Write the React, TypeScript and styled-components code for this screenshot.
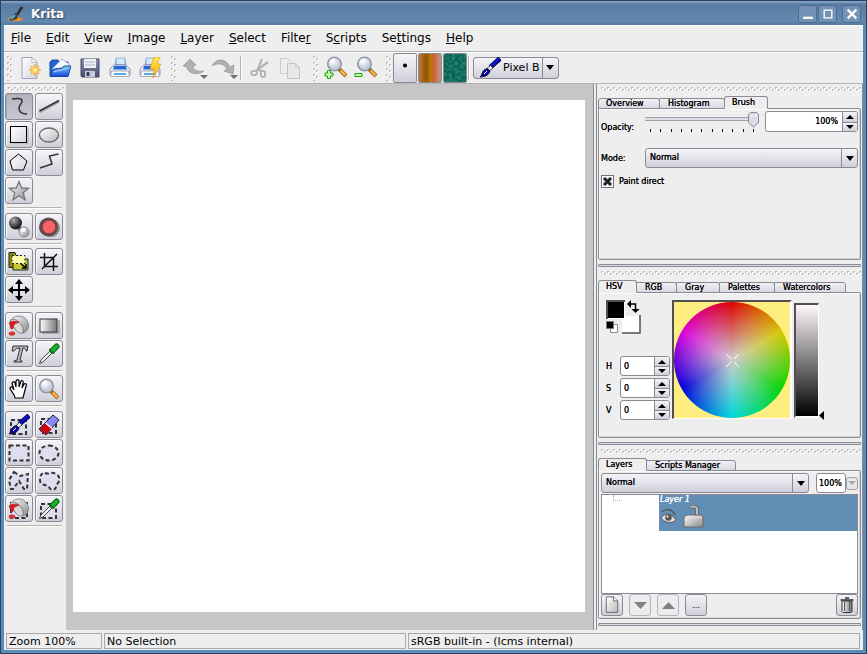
import React from "react";
import styled, { createGlobalStyle, css } from "styled-components";

const svgUrl = (body: string, w: number, h: number) =>
  `url("data:image/svg+xml,${encodeURIComponent(
    `<svg xmlns='http://www.w3.org/2000/svg' width='${w}' height='${h}' viewBox='0 0 ${w} ${h}'>${body}</svg>`
  )}")`;

const arrowDown = svgUrl("<path d='M0 0h8L4 5z' fill='#000'/>", 8, 5);
const thumb = svgUrl(
  "<path d='M2.500 .5h6l2 2v8l-5 4.500-5-4.500v-8z' fill='#dcdce6' stroke='#868694'/><path d='M3 3.500h2M7 3.500h2' stroke='#fff'/>",
  11,
  16
);
const gripH = svgUrl(
  "<path d='M0 1h2v1h-1v1h-1zM3 3h2v1h-1v1h-1z' fill='#bdbdbd'/><path d='M2 2h1v1h-1v1h-1v-1h1zM5 4h1v1h-1v1h-1v-1h1z' fill='#fff'/>",
  6,
  6
);
const cross = svgUrl("<path d='M2 2l7 7M9 2l-7 7' stroke='#222' stroke-width='3'/>", 11, 11);

const LINE = "#8a8a94";
const FACE = "#eeeeee";
const BUTTON = "linear-gradient(#f4f4f8, #e4e4ec 45%, #cfcfda)";

const Global = createGlobalStyle`
  html, body { margin: 0; height: 100%; }
  *, *::before, *::after { box-sizing: border-box; }
  body, button, input, select {
    font-family: "DejaVu Sans", Verdana, sans-serif;
    font-size: 8px;
    color: #000;
  }
  button, input, select { margin: 0; padding: 0; outline: none; }
  svg { display: block; flex: none; }
`;

/* ---------- window ---------- */
const Window = styled.div`
  min-height: 100vh;
  display: flex;
  flex-direction: column;
  background: ${FACE};
  border: 1px solid #29425e;
  border-width: 0 1px 1px;
  box-shadow: inset 3px 0 #5b8bb8, inset -3px 0 #5b8bb8, inset 0 -3px #5b8bb8;
  padding: 0 3px 3px;
`;
const TitleBar = styled.header`
  height: 25px;
  margin: 0 -3px;
  padding: 3px 5px 0 5px;
  display: flex;
  align-items: center;
  gap: 7px;
  background: linear-gradient(#2e3f58 0 1px, #7fa3c6 1px 2px, #587ba0 4px, #6389b0 22px, #587ea4 23px);
`;
const Title = styled.h1`
  flex: 1;
  margin: 0;
  font-size: 12px;
  line-height: 16px;
  color: #fff;
  text-shadow: 1px 1px 1px #2c4464;
`;
const WindowButton = styled.button<{ $apart?: boolean }>`
  width: 19px;
  height: 18px;
  display: grid;
  place-items: center;
  border: 1px solid #4d6d90;
  border-radius: 3px;
  background: #7393b6;
  margin-left: ${(p) => (p.$apart ? "-2px" : "-6px")};
`;
const MenuBar = styled.nav`
  height: 27px;
  padding: 0 7px 2px;
  display: flex;
  align-items: center;
  gap: 15px;
  border-top: 1px solid #fff;
  border-bottom: 1px solid #b4b4b4;
`;
const MenuItem = styled.button`
  border: 0;
  background: none;
  font-size: 12px;
  line-height: 18px;
  u { text-underline-offset: 1px; }
`;

/* ---------- toolbar ---------- */
const Toolbar = styled.div`
  height: 32px;
  padding-bottom: 1px;
  display: flex;
  align-items: center;
  border-top: 1px solid #fff;
  border-bottom: 1px solid #b4b4b4;
`;
const ToolbarGroup = styled.div<{ $start?: number; $end: number }>`
  display: flex;
  align-items: center;
  gap: 6px;
  padding: 0 ${(p) => p.$end}px 0 ${(p) => p.$start ?? 0}px;
`;
const ChooserGroup = styled(ToolbarGroup)`
  gap: 1px;
`;
const GripV = styled.div<{ $end?: number }>`
  width: 6px;
  height: 26px;
  margin: 0 ${(p) => p.$end ?? 5}px 0 3px;
  background: ${gripH};
`;
const GripRow = styled.div`
  height: 6px;
  margin: 2px 0 0 3px;
  background: ${gripH};
`;
const IconButton = styled.button`
  width: 24px;
  height: 26px;
  display: grid;
  place-items: center;
  border: 0;
  background: none;
`;
const Divider = styled.div`
  width: 2px;
  height: 24px;
  border-left: 1px solid #b0b0b0;
  border-right: 1px solid #fff;
`;
const Chooser = styled.button`
  width: 24px;
  height: 30px;
  display: grid;
  place-items: center;
  border: 1px solid ${LINE};
  border-radius: 2px;
  background: ${BUTTON};
  overflow: hidden;
`;
const PaintopBox = styled.label`
  display: flex;
  align-items: center;
  width: 86px;
  height: 22px;
  margin-left: 3px;
  padding-left: 5px;
  border: 1px solid ${LINE};
  border-radius: 3px;
  background: ${BUTTON};
`;
const PaintopSelect = styled.select`
  appearance: none;
  flex: 1;
  min-width: 0;
  height: 20px;
  padding: 0 17px 0 2px;
  border: 0;
  font-size: 11px;
  text-overflow: clip;
  background: ${arrowDown} right 4px center no-repeat,
    linear-gradient(${LINE}, ${LINE}) right 15px center / 1px 100% no-repeat;
`;

/* ---------- main area ---------- */
const Main = styled.main`
  flex: 1;
  display: flex;
`;
const Toolbox = styled.aside`
  flex: 0 0 62px;
  padding: 0 1px;
`;
const ToolGroup = styled.div<{ $tight?: boolean }>`
  display: grid;
  grid-template-columns: 28px 28px;
  gap: 1px 2px;
  margin-top: 1px;
  &::after {
    content: "";
    grid-column: 1 / -1;
    height: 2px;
    margin: 2px 1px ${(p) => (p.$tight ? 2 : 3)}px 2px;
    border-top: 1px solid #b4b4b4;
    border-bottom: 1px solid #fff;
  }
`;
const Tool = styled.button<{ $on?: boolean }>`
  height: 27px;
  display: grid;
  place-items: center;
  border: 1px solid ${LINE};
  border-radius: 3px;
  background: ${(p) => (p.$on ? "linear-gradient(#b4b4be, #c6c6d0)" : BUTTON)};
  box-shadow: inset 1px 1px ${(p) => (p.$on ? "#a8a8b2" : "#fafafc")};
`;
const Workspace = styled.section`
  flex: 1;
  display: flex;
  padding: 16px 8px 18px 7px;
  background: #c6c6c6;
`;
const Paper = styled.div`
  flex: 1;
  background: #fff;
`;

/* ---------- docks ---------- */
const Docks = styled.aside`
  flex: 0 0 270px;
  display: grid;
  grid-template-rows: 184fr 178fr 184fr;
  padding-left: 2px;
  border-left: 1px solid ${LINE};
`;
const Dock = styled.section`
  display: flex;
  flex-direction: column;
  min-height: 0;
  padding: 0 1px 1px 1px;
  border-left: 1px solid ${LINE};
  border-right: 1px solid ${LINE};
  &::after {
    content: "";
    height: 3px;
    margin-top: 4px;
    border: 1px solid ${LINE};
    background: #dcdce6;
    border-radius: 1px;
  }
  &:last-child { padding-bottom: 4px; }
`;
const Tabs = styled.div`
  display: flex;
  align-items: flex-end;
  height: 17px;
  margin-bottom: -1px;
`;
const Tab = styled.button<{ $on?: boolean; $w: number }>`
  width: ${(p) => p.$w}px;
  height: 11px;
  padding-left: 8px;
  text-align: left;
  line-height: 9px;
  border: 1px solid ${LINE};
  border-radius: 0 3px 0 0;
  margin-left: -1px;
  background: linear-gradient(#f0f0f4, #d8d8e2);
  text-shadow: 0 0 0 #000;
  &:first-child { margin-left: 0; padding-left: 7px; border-radius: 3px 3px 0 0; }
  ${(p) =>
    p.$on &&
    css`
      height: 13px;
      padding-left: 7px;
      background: ${FACE};
      border-bottom-color: ${FACE};
      border-radius: 3px 3px 0 0;
      z-index: 1;
    `}
`;
const Panel = styled.div`
  flex: 1;
  min-height: 0;
  display: flex;
  flex-direction: column;
  border: 1px solid ${LINE};
  border-radius: 0 2px 2px 2px;
  box-shadow: inset 1px 1px #fafafa, inset -1px -1px #d4d4d4;
  text-shadow: 0 0 0 #000;
`;
const BrushForm = styled.div`
  display: grid;
  grid-template-columns: 44px 1fr;
  align-items: center;
  row-gap: 16px;
  padding: 2px;
`;
const OpacityLabel = styled.label`
  align-self: end;
`;
const OpacityRow = styled.div`
  display: grid;
  grid-template-columns: 1fr 93px;
  column-gap: 6px;
`;
const Slider = styled.input`
  appearance: none;
  display: block;
  width: 100%;
  height: 18px;
  background: linear-gradient(#a0a0aa 0 1px, #dedee6 1px 3px, #a0a0aa 3px 4px) 0 6px / 100% 4px no-repeat;
  &::-webkit-slider-thumb {
    appearance: none;
    width: 11px;
    height: 16px;
    background: ${thumb};
  }
`;
const Ticks = styled.div`
  display: flex;
  justify-content: space-between;
  padding: 0 5px;
  i { width: 1px; height: 3px; background: #000; }
`;
const SpinBox = styled.div<{ $w?: number }>`
  display: flex;
  width: ${(p) => (p.$w ? `${p.$w}px` : "auto")};
  height: ${(p) => (p.$w ? 20 : 21)}px;
  border: 1px solid ${LINE};
  border-radius: 3px;
  background: #fff;
  overflow: hidden;
`;
const SpinInput = styled.input<{ $right?: boolean }>`
  flex: 1;
  min-width: 0;
  padding: 0 4px 0 3px;
  border: 0;
  background: none;
  text-align: ${(p) => (p.$right ? "right" : "left")};
  text-shadow: 0 0 0 #000;
`;
const SpinButtons = styled.div`
  width: 15px;
  display: grid;
  grid-template-rows: 1fr 1fr;
  border-left: 1px solid ${LINE};
  button {
    display: grid;
    place-items: center;
    border: 0;
    background: ${BUTTON};
  }
  button + button { border-top: 1px solid ${LINE}; }
`;
const Combo = styled.select`
  appearance: none;
  flex: 1;
  width: 100%;
  height: 20px;
  padding: 0 18px 2px 4px;
  border: 1px solid ${LINE};
  border-radius: 3px;
  text-shadow: 0 0 0 #000;
  background: ${arrowDown} right 3px center no-repeat,
    linear-gradient(${LINE}, ${LINE}) right 15px center / 1px 100% no-repeat, ${BUTTON};
`;
const Check = styled.label`
  display: flex;
  align-items: center;
  gap: 5px;
  padding: 5px 2px;
  input {
    appearance: none;
    width: 13px;
    height: 13px;
    border: 1px solid #70707a;
    background: #e8e8ee;
    box-shadow: inset 0 0 0 1px #fff;
  }
  input:checked { background: ${cross} center no-repeat #e8e8ee; }
`;

const ColorForm = styled.div`
  display: flex;
  padding: 7px;
`;
const ColorLeft = styled.div`
  width: 66px;
  display: flex;
  flex-direction: column;
  justify-content: space-between;
`;
const ChannelList = styled.div`
  display: grid;
  gap: 2px;
`;
const Channel = styled.label`
  display: flex;
  align-items: center;
  justify-content: space-between;
  width: 64px;
`;
const WheelBox = styled.div`
  display: grid;
  place-items: center;
  width: 120px;
  height: 119px;
  margin-bottom: 1px;
  border: solid #505050;
  border-width: 2px 0 0 2px;
  border-right: 2px solid #fff;
  border-bottom: 1px solid #fff;
  background: #feee82;
`;
const Wheel = styled.div`
  width: 116px;
  height: 116px;
  display: grid;
  place-items: center;
  border-radius: 50%;
  background: radial-gradient(circle closest-side, #cdcdcd 0, #cdcdcd00 100%),
    conic-gradient(#dc0000, #d8c800 60deg, #00d800 120deg, #00d8dc 180deg, #0000dc 240deg, #dc00dc 300deg, #dc0000);
`;
const ValueBar = styled.div`
  width: 25px;
  height: 115px;
  margin: 3px 0 0 2px;
  border: solid #505050;
  border-width: 2px 0 0 2px;
  border-right: 1px solid #fff;
  border-bottom: 2px solid #fff;
  background: linear-gradient(#fdf8fc, #000);
`;
const ValueMark = styled.div`
  align-self: flex-end;
`;

const LayerForm = styled.div`
  flex: 1;
  display: flex;
  flex-direction: column;
  padding: 2px;
  min-height: 0;
`;
const LayerTop = styled.div`
  display: flex;
  align-items: center;
`;
const PercentInput = styled.input`
  width: 30px;
  height: 20px;
  margin-left: 7px;
  padding-left: 2px;
  border: 1px solid ${LINE};
  border-radius: 3px;
  background: #fff;
  text-shadow: 0 0 0 #000;
`;
const PopButton = styled.button`
  width: 12px;
  height: 13px;
  display: grid;
  place-items: center;
  border: 1px solid #a0a0a6;
  border-radius: 3px;
  background: #e6e6ea;
`;
const LayerList = styled.ul`
  flex: 1;
  margin: 1px 0 0;
  padding: 0;
  list-style: none;
  border: 1px solid ${LINE};
  background: #fff;
`;
const LayerRow = styled.li`
  display: grid;
  grid-template-columns: 57px 1fr;
`;
const Branch = styled.div`
  width: 9px;
  height: 6px;
  margin-left: 11px;
  border: dotted #b0b0b0;
  border-width: 0 0 1px 1px;
`;
const LayerItem = styled.div`
  height: 36px;
  padding-left: 1px;
  background: #628eb5;
  color: #fff;
  font-style: italic;
  line-height: 10px;
  text-shadow: 0 0 0 #fff;
`;
const LayerIcons = styled.div`
  display: flex;
  gap: 5px;
`;
const LayerActions = styled.div`
  display: flex;
  gap: 6px;
`;
const ActionButton = styled.button`
  width: 22px;
  height: 22px;
  display: grid;
  place-items: center;
  border: 1px solid ${LINE};
  border-radius: 3px;
  background: ${BUTTON};
  &:disabled { border-color: #b4b4ba; background: #ececee; }
  &:last-child { margin-left: auto; }
`;

/* ---------- status bar ---------- */
const StatusBar = styled.footer`
  display: grid;
  grid-template-columns: 96fr 302fr 452fr;
  gap: 2px;
  padding: 3px 3px 1px 2px;
`;
const StatusCell = styled.div`
  height: 16px;
  padding: 1px 0 0 2px;
  border: 1px solid #a8a8a8;
  font-size: 11px;
  line-height: 14px;
  white-space: nowrap;
`;

/* ---------- drawings ---------- */
const Art = ({ s = 22, children }: { s?: number; children: React.ReactNode }) => (
  <svg width={s} height={s} viewBox="0 0 22 22" fill="none" aria-hidden="true">
    {children}
  </svg>
);

const Defs = () => (
  <svg width="0" height="0" aria-hidden="true">
    <defs>
      <linearGradient id="paper" x2="1" y2="1"><stop stopColor="#fff" /><stop offset="1" stopColor="#d4d4e0" /></linearGradient>
      <linearGradient id="steel" x2="1" y2="1"><stop stopColor="#fff" /><stop offset="1" stopColor="#888" /></linearGradient>
      <linearGradient id="pale" x2="1" y2="1"><stop stopColor="#fff" /><stop offset="1" stopColor="#b8b8b8" /></linearGradient>
      <linearGradient id="blue" x2="0" y2="1"><stop stopColor="#8cc8ff" /><stop offset="1" stopColor="#0a48d8" /></linearGradient>
      <linearGradient id="bolt" x2="0" y2="1"><stop stopColor="#ffee50" /><stop offset="1" stopColor="#ffa800" /></linearGradient>
      <linearGradient id="fade"><stop stopColor="#fff" /><stop offset="1" stopColor="#777" /></linearGradient>
      <linearGradient id="floppy" x2="0" y2="1"><stop stopColor="#8890b0" /><stop offset="1" stopColor="#464c70" /></linearGradient>
      <linearGradient id="wood">
        <stop stopColor="#b87848" /><stop offset=".22" stopColor="#a06010" /><stop offset=".35" stopColor="#945400" />
        <stop offset=".5" stopColor="#b87410" /><stop offset=".62" stopColor="#cc6a20" /><stop offset=".68" stopColor="#d85838" />
        <stop offset=".78" stopColor="#c47858" /><stop offset="1" stopColor="#c09888" />
      </linearGradient>
      <radialGradient id="lens" cx=".4" cy=".3"><stop stopColor="#fff" /><stop offset="1" stopColor="#c4ccdc" /></radialGradient>
      <radialGradient id="ball" cx=".35" cy=".3" r=".6"><stop stopColor="#aaa" /><stop offset="1" stopColor="#222" /></radialGradient>
      <filter id="cloth" x="0" y="0" width="1" height="1" colorInterpolationFilters="sRGB">
        <feTurbulence type="fractalNoise" baseFrequency=".35" numOctaves="2" seed="4" />
        <feColorMatrix values=".2 0 0 0 -.02  .35 0 0 0 .26  .3 0 0 0 .22  0 0 0 0 1" />
      </filter>
    </defs>
  </svg>
);

const Brush = () => (
  <>
    <path d="M21 1.500L11.500 10" stroke="#000058" strokeWidth="5" />
    <path d="M20.500 1.500L11.500 9.500" stroke="#1010c8" strokeWidth="3" />
    <path d="M11.500 8.500l2.500 2.500-3.500 3-2.500-2.500z" fill="#e8e8e8" stroke="#333" strokeWidth=".8" />
    <path d="M8.500 11.500l2.500 2.500c-1 4-4 5.500-10 6 3-2 1-7 7.500-8.500z" fill="#0808a8" stroke="#000" strokeWidth=".8" />
    <path d="M5 17l3-3" stroke="#fff" />
  </>
);
const Magnifier = () => (
  <>
    <path d="M13 13l7 7" stroke="#9a6210" strokeWidth="4" />
    <path d="M14.500 14.500l5 5" stroke="#f4b040" strokeWidth="2.500" />
    <circle cx="8.500" cy="8" r="6.800" fill="url(#lens)" stroke="#9098a8" strokeWidth="1.500" />
    <path d="M4.500 7a4.500 4.500 0 0 1 4-4" stroke="#fff" strokeWidth="1.500" />
  </>
);
const Printer = () => (
  <>
    <path d="M6 9L7 1h9l1 8z" fill="url(#blue)" stroke="#98a4b8" strokeWidth=".8" />
    <path d="M7.500 1.500h8l.3 6h-8.500z" fill="#d4e8fc" />
    <path d="M1 12l4-4h12l4 4v6H1z" fill="url(#paper)" stroke="#9094a8" />
    <path d="M5 9h12l1 3.500H4z" fill="#2068d8" />
    <path d="M2.500 14h17l1 5.500h-19z" fill="#fff" stroke="#a4a8b8" />
    <path d="M5 16h12l.5 2h-13z" fill="#50a8f0" />
  </>
);
const Dashed = ({ d }: { d: string }) => (
  <path d={d} fill="#dedeee" stroke="#333" strokeWidth="2" strokeDasharray="4 2.500" />
);
const Bucket = () => (
  <>
    <path d="M2 6c2-3 5-5 9-5 5 0 9 4 9.500 9 .3 4-2 7.500-6 8z" fill="url(#steel)" stroke="#777" strokeWidth=".8" />
    <path d="M2 6c1-2 5-3 9 1 4 4 5 8 3.500 11C12 19 9 17 7 14z" fill="#d8d8d8" stroke="#666" strokeWidth=".8" />
    <path d="M1 8c2-2 6-2.500 10-1L6 9.500C5 11 6 14 4 14c-2.500 0-1-3-3-6z" fill="#e01818" stroke="#901010" strokeWidth=".5" />
    <ellipse cx="4" cy="18.500" rx="3" ry="1.800" fill="#f03030" stroke="#a01818" strokeWidth=".5" />
  </>
);
const Dropper = () => (
  <>
    <path d="M13 7L3 17l-1.500 3.500L5 19 15 9z" fill="#e8f4ec" stroke="#444" />
    <path d="M11.500 6l4.500 4.500" stroke="#222" strokeWidth="1.600" />
    <path d="M14.500 7.500l4-4" stroke="#087018" strokeWidth="6" strokeLinecap="round" />
    <path d="M15 7l3.500-3.500" stroke="#20b030" strokeWidth="3.500" strokeLinecap="round" />
  </>
);
const NewDoc = () => (
  <Art>
    <path d="M3 .5h10l5 5v16H3z" fill="url(#paper)" stroke="#a4a4b4" />
    <path d="M13 .5v5h5z" fill="#fff" stroke="#a4a4b4" strokeWidth=".7" />
    <path d="M16 7l1 3 3-1-1 3 3 1-3 1 1 3-3-1-1 3-1-3-3 1 1-3-3-1 3-1-1-3 3 1z" fill="#ffd060" stroke="#e8a030" strokeWidth=".6" />
    <circle cx="16" cy="13" r="1.500" fill="#fff8c8" />
  </Art>
);
const OpenDoc = () => (
  <Art>
    <path d="M1 19V5l2-2h6l1 2h9v14z" fill="#2264d8" stroke="#1848a0" />
    <path d="M3 12L13 2l7 5-2 6z" fill="#f4f8ff" stroke="#98a8c8" strokeWidth=".8" />
    <path d="M1 19.500L5 12l8-1 2-2h7l-3 10.500z" fill="url(#blue)" stroke="#1848a0" />
    <path d="M4 15l9-2 6-2" stroke="#a0d4ff" />
  </Art>
);
const Save = () => (
  <Art>
    <path d="M2 2h18v18H3l-1-1z" fill="url(#floppy)" stroke="#404868" />
    <path d="M5 2h12v9H5z" fill="#eef0f6" />
    <path d="M6 5h10M6 8h10" stroke="#b0b4c4" />
    <path d="M6 14h10v6H6z" fill="#c8ccd8" /><path d="M7.500 15h3v4h-3z" fill="#383e60" />
  </Art>
);
const Undo = ({ flip }: { flip?: boolean }) => (
  <svg width="26" height="24" viewBox="0 0 26 24" aria-hidden="true">
    <g fill="#b0b0b0" stroke="#929292" strokeWidth=".7">
      {flip ? (
        <path d="M0 10c4-8 14-8 18 1l4-2-1 9-9-3 3-2c-3-5-8-7-15-3z" />
      ) : (
        <path d="M1 10l7-7 6 6-3 1c0 4 4 6 11 5-5 4-16 4-17-4z" />
      )}
    </g>
    <path d="M18 19h8l-4 4z" fill="#707070" />
  </svg>
);
const Cut = () => (
  <Art>
    <path d="M13 2l-5 12M19 5L7 14" stroke="#b4b4b4" strokeWidth="2.200" />
    <ellipse cx="5" cy="16" rx="3" ry="2.200" stroke="#b0b0b0" strokeWidth="1.800" />
    <ellipse cx="14" cy="17" rx="2.200" ry="3.200" stroke="#b0b0b0" strokeWidth="1.800" />
    <path d="M9 12l4 3" stroke="#b0b0b0" strokeWidth="2" />
  </Art>
);
const Copy = () => (
  <Art>
    <path d="M1.500 1.500h7l4 4v11h-11z" fill="#eee" stroke="#ccc" />
    <path d="M8.500 6.500h8l4 4v11h-12z" fill="#e8e8e8" stroke="#c4c4c4" /><path d="M16.500 6.500v4h4" stroke="#ccc" />
  </Art>
);
const Zoom = ({ plus }: { plus?: boolean }) => (
  <svg width="24" height="24" viewBox="0 0 24 24" fill="none" aria-hidden="true">
    <g transform="translate(2 0)"><Magnifier /></g>
    <path d={plus ? "M1 17h2.500v-2.500h3V17H9v3H6.500v2.500h-3V20H1z" : "M1 17.500h7v3H1z"} fill="#c8ffb0" stroke="#18a010" />
  </svg>
);

const tools: Record<string, React.ReactNode> = {
  Freehand: <path d="M4 3c5-1 10-1 10 2 0 3-3 4-3 7s1 6 8 6" stroke="#333" strokeWidth="1.500" />,
  Line: <><path d="M1.500 16L21 5.500" stroke="#aaa" strokeWidth="3" /><path d="M1.500 15L21 4.500" stroke="#333" strokeWidth="1.500" /></>,
  Rectangle: <><path d="M4 19h16V3" stroke="#aaa" strokeWidth="1" /><rect x="2.500" y="2.500" width="16" height="16" fill="url(#paper)" stroke="#000" /></>,
  Ellipse: <ellipse cx="11" cy="11" rx="9.500" ry="7" fill="url(#pale)" stroke="#666" strokeWidth="1.300" />,
  Polygon: <path d="M10.500 2L19 9l-3.500 9h-11L2 9z" fill="url(#paper)" stroke="#000" />,
  Polyline: <path d="M2 16l12-4-2.500-8 9-2" stroke="#333" strokeWidth="1.500" />,
  Star: <path d="M11 1.500l2.600 6.500 7 .4-5.400 4.400 2 7-6.200-4-6 4 1.800-7L1.400 8.400l7-.4z" fill="url(#steel)" stroke="#777" strokeWidth="1.300" />,
  Duplicate: <><path d="M9 10l5 5" stroke="#777" strokeWidth="4" /><circle cx="16" cy="16" r="5" fill="url(#steel)" stroke="#888" /><circle cx="15.500" cy="14" r="2.200" fill="#fff" /><circle cx="7.500" cy="7" r="6.500" fill="url(#ball)" /></>,
  Filter: <><circle cx="13" cy="12" r="9" fill="#8a8a8a" /><circle cx="10.500" cy="11" r="9.500" fill="#585050" /><circle cx="11" cy="11" r="6.800" fill="#f46468" stroke="#a03038" /></>,
  Transform: <><path d="M1 1.500h6l1 3h3v12H1z" fill="#8c8c10" stroke="#222" /><path d="M5 8h15v11H5z" fill="#c8c830" stroke="#222" /><path d="M4 4.500h13v8H4z" fill="#ffffb0" stroke="#222" strokeDasharray="2 2" /><path d="M13 13l5 4M18 13v4h-4" stroke="#000" strokeWidth="1.500" /></>,
  Crop: <path d="M6.500 2v13.500H20M2 6.500h13.500V20M4 18L19 3" stroke="#111" strokeWidth="1.500" />,
  Move: <><path d="M11 2v18M2 11h18" stroke="#000" strokeWidth="2" /><path d="M11 0l4 5H7zM11 22l4-5H7zM0 11l5-4v8zM22 11l-5-4v8z" fill="#000" /></>,
  Fill: <Bucket />,
  Gradient: <><path d="M4 18h17V5" stroke="#aaa" strokeWidth="2" /><rect x="2" y="4" width="17" height="13" fill="url(#fade)" stroke="#333" /></>,
  Text: <path d="M5 3h15l-1 5h-1c0-2-1-3-3-3l-3 12 2 1v1H6v-1l3-1 3-12C9 5 7 6 6 8H4z" fill="#bbb" stroke="#333" />,
  Picker: <Dropper />,
  Pan: <path d="M7 20c0-4-4-6-5-10 1-2 3-1 4 2L4 5c1-2 3-1 3 0l1 4V3c1-2 3-1 3 0v6l2-6c1-1 3 0 2 2l-1 5 2-4c2-1 3 0 2 2-1 4-2 8-3 12z" fill="#fff" stroke="#000" strokeWidth="1.200" />,
  Magnify: <Magnifier />,
  "Paint selection": <><Dashed d="M3 6h15v14H3z" /><Brush /></>,
  "Erase selection": <><Dashed d="M3 5h15v14H3z" /><path d="M1 15L15 1l6 5L8 21z" fill="#8888f8" stroke="#222" /><path d="M1.500 15l6-6 6.500 5.500-6 6z" fill="#d00010" /><path d="M7.500 9l6.500 5.500" stroke="#fff" strokeWidth="1.500" /></>,
  "Select rectangle": <Dashed d="M1.500 3.500h19v15h-19z" />,
  "Select ellipse": <Dashed d="M11 3.500a9.500 7.500 0 1 1 0 15a9.500 7.500 0 1 1 0-15" />,
  "Select polygon": <Dashed d="M6 2l6 4 8-2-1 15h-3l-5-8-6 8H3L1 10z" />,
  "Select outline": <Dashed d="M7 3c4 2 6-2 11 1s4 8 0 11c1 6-6 6-7 2-3-3-9-1-9-7 0-4 1-7 5-7z" />,
  "Select contiguous": <><Dashed d="M3 5h16v15H3z" /><Bucket /></>,
  "Select similar": <><Dashed d="M3 6h15v14H3z" /><Dropper /></>,
};

const groups: { names: string[]; tight?: boolean }[] = [
  { names: ["Freehand", "Line", "Rectangle", "Ellipse", "Polygon", "Polyline", "Star"] },
  { names: ["Duplicate", "Filter"], tight: true },
  { names: ["Transform", "Crop", "Move"] },
  { names: ["Fill", "Gradient", "Text", "Picker"], tight: true },
  { names: ["Pan", "Magnify"] },
  { names: ["Paint selection", "Erase selection", "Select rectangle", "Select ellipse", "Select polygon", "Select outline", "Select contiguous", "Select similar"] },
];

const menus = ["_File", "_Edit", "_View", "_Image", "_Layer", "_Select", "Filte_r", "S_cripts", "Se_ttings", "_Help"];

const Triangle = ({ up, w = 8, color = "#000" }: { up?: boolean; w?: number; color?: string }) => (
  <svg width={w} height={Math.ceil(w / 2)} viewBox="0 0 8 4" preserveAspectRatio="none" aria-hidden="true">
    <path d={up ? "M0 4h8L4 0z" : "M0 0h8L4 4z"} fill={color} />
  </svg>
);

const Spin = ({ label, value, width, right }: { label: string; value: string; width?: number; right?: boolean }) => (
  <SpinBox $w={width}>
    <SpinInput id={label} aria-label={label} defaultValue={value} $right={right} />
    <SpinButtons>
      <button aria-label={`Increase ${label}`}><Triangle up /></button>
      <button aria-label={`Decrease ${label}`}><Triangle /></button>
    </SpinButtons>
  </SpinBox>
);

const TabStrip = ({ tabs, active }: { tabs: [string, number][]; active: string }) => (
  <Tabs role="tablist">
    {tabs.map(([name, w]) => (
      <Tab key={name} role="tab" aria-selected={name === active} $on={name === active} $w={w}>{name}</Tab>
    ))}
  </Tabs>
);

export default function App() {
  return (
    <>
      <Global />
      <Window>
        <TitleBar>
          <svg width="18" height="18" viewBox="0 0 18 18" fill="none" aria-hidden="true">
            <path d="M1 14c3-3 13-2 16 0-2 3-12 3-16 0z" fill="#f09020" />
            <path d="M16 2l-5 8" stroke="#302820" strokeWidth="2.500" />
            <path d="M12 9l-1 5-6 2-2-2c3-1 4-5 6-6z" fill="#404040" />
            <path d="M5 14l4-4" stroke="#58b8c8" strokeWidth="2" />
          </svg>
          <Title>Krita</Title>
          <WindowButton aria-label="Minimize"><Art s={12}><path d="M2 18h18" stroke="#fff" strokeWidth="4" /></Art></WindowButton>
          <WindowButton aria-label="Maximize"><Art s={12}><path d="M4 4h14v14H4z" stroke="#fff" strokeWidth="2.500" /></Art></WindowButton>
          <WindowButton $apart aria-label="Close"><Art s={12}><path d="M3 3l16 16M19 3L3 19" stroke="#fff" strokeWidth="4" /></Art></WindowButton>
        </TitleBar>
        <MenuBar>
          {menus.map((m) => {
            const [before, after] = m.split("_");
            return <MenuItem key={m}>{before}<u>{after[0]}</u>{after.slice(1)}</MenuItem>;
          })}
        </MenuBar>
        <Toolbar>
          <GripV />
          <ToolbarGroup $end={6}>
            <IconButton aria-label="New"><NewDoc /></IconButton>
            <IconButton aria-label="Open"><OpenDoc /></IconButton>
            <IconButton aria-label="Save"><Save /></IconButton>
            <IconButton aria-label="Print"><Art><Printer /></Art></IconButton>
            <IconButton aria-label="Quick print"><Art><Printer /><path d="M15 0h6l-3 7h4l-8 14 1-9h-4z" fill="url(#bolt)" stroke="#e89000" strokeWidth=".6" /></Art></IconButton>
          </ToolbarGroup>
          <GripV />
          <ToolbarGroup $end={4}>
            <IconButton aria-label="Undo"><Undo /></IconButton>
            <IconButton aria-label="Redo"><Undo flip /></IconButton>
          </ToolbarGroup>
          <Divider />
          <ToolbarGroup $start={6} $end={8}>
            <IconButton aria-label="Cut"><Cut /></IconButton>
            <IconButton aria-label="Copy"><Copy /></IconButton>
          </ToolbarGroup>
          <GripV />
          <ToolbarGroup $end={5}>
            <IconButton aria-label="Zoom in"><Zoom plus /></IconButton>
            <IconButton aria-label="Zoom out"><Zoom /></IconButton>
          </ToolbarGroup>
          <GripV $end={1} />
          <ChooserGroup $end={1}>
            <Chooser aria-label="Brush shape"><svg width="6" height="10" viewBox="0 0 6 10"><circle cx="3" cy="2.500" r="2" /></svg></Chooser>
            <Chooser aria-label="Gradient"><svg width="22" height="28"><rect width="22" height="28" fill="url(#wood)" /></svg></Chooser>
            <Chooser aria-label="Pattern"><svg width="22" height="28"><rect width="22" height="28" fill="#187060" filter="url(#cloth)" /></svg></Chooser>
          </ChooserGroup>
          <Divider />
          <PaintopBox>
            <Art><Brush /></Art>
            <PaintopSelect aria-label="Paint operation"><option>Pixel B</option></PaintopSelect>
          </PaintopBox>
        </Toolbar>
        <Main>
          <Toolbox>
            <GripRow />
            {groups.map((g) => (
              <ToolGroup key={g.names[0]} $tight={g.tight}>
                {g.names.map((n) => (
                  <Tool key={n} aria-label={n} $on={n === "Freehand"}><Art>{tools[n]}</Art></Tool>
                ))}
              </ToolGroup>
            ))}
          </Toolbox>
          <Workspace><Paper /></Workspace>
          <Docks>
            <Dock>
              <GripRow />
              <TabStrip active="Brush" tabs={[["Overview", 62], ["Histogram", 66], ["Brush", 44]]} />
              <Panel>
                <BrushForm>
                  <OpacityLabel htmlFor="opacity">Opacity:</OpacityLabel>
                  <OpacityRow>
                    <div>
                      <Slider id="opacity" type="range" defaultValue={100} />
                      <Ticks>{Array.from({ length: 11 }, (_, i) => <i key={i} />)}</Ticks>
                    </div>
                    <Spin label="Opacity percent" value="100%" right />
                  </OpacityRow>
                  <label htmlFor="mode">Mode:</label>
                  <Combo id="mode"><option>Normal</option></Combo>
                </BrushForm>
                <Check><input type="checkbox" defaultChecked />Paint direct</Check>
              </Panel>
            </Dock>
            <Dock>
              <GripRow />
              <TabStrip active="HSV" tabs={[["HSV", 39], ["RGB", 41], ["Gray", 44], ["Palettes", 56], ["Watercolors", 72]]} />
              <Panel>
                <ColorForm>
                  <ColorLeft>
                    <svg width="36" height="34" viewBox="0 0 36 34" fill="none" aria-hidden="true">
                      <path d="M16 16h18v17H16z" fill="#fff" /><path d="M34 15v18H16" stroke="#505050" strokeWidth="1.500" />
                      <path d="M0 0h19v19H0z" fill="#fff" /><path d="M0 0h19v2H2v17H0z" fill="#505050" /><path d="M2 2h16v16H2z" fill="#000" />
                      <path d="M23.500 4h6v6" stroke="#000" strokeWidth="1.500" /><path d="M21 4l4-4v8zM29.500 13l-4-4h8z" fill="#000" />
                      <path d="M4.500 24.500h7v8h-7z" fill="#fff" stroke="#888" /><path d="M.5 21.500h7v7h-7z" fill="#000" stroke="#777" />
                    </svg>
                    <ChannelList>
                      {["H", "S", "V"].map((c) => (
                        <Channel key={c} htmlFor={c}>{c}<Spin label={c} value="0" width={50} /></Channel>
                      ))}
                    </ChannelList>
                  </ColorLeft>
                  <WheelBox>
                    <Wheel>
                      <svg width="13" height="13" viewBox="0 0 13 13" aria-hidden="true"><path d="M0 0l5 5M8 8l5 5M13 0L8 5M5 8l-5 5" stroke="#fff" /></svg>
                    </Wheel>
                  </WheelBox>
                  <ValueBar />
                  <ValueMark><svg width="5" height="9" viewBox="0 0 5 9" aria-hidden="true"><path d="M5 0v9L0 4.500z" /></svg></ValueMark>
                </ColorForm>
              </Panel>
            </Dock>
            <Dock>
              <GripRow />
              <TabStrip active="Layers" tabs={[["Layers", 49], ["Scripts Manager", 90]]} />
              <Panel>
                <LayerForm>
                  <LayerTop>
                    <Combo aria-label="Layer mode"><option>Normal</option></Combo>
                    <PercentInput aria-label="Layer opacity" defaultValue="100%" />
                    <PopButton aria-label="Opacity slider"><Triangle color="#aaa" /></PopButton>
                  </LayerTop>
                  <LayerList>
                    <LayerRow>
                      <Branch />
                      <LayerItem>
                        Layer 1
                        <LayerIcons>
                          <svg width="18" height="20" viewBox="0 0 18 20" fill="none" aria-hidden="true">
                            <path d="M2 7c4-4 10-3 13 3" stroke="#555" strokeWidth="1.300" />
                            <path d="M1 13c3-5 10-6 15 2-4 4-11 3-15-2z" fill="#ddd" stroke="#555" />
                            <circle cx="8.500" cy="12.500" r="3.200" fill="#555" /><circle cx="7.500" cy="11.500" r="1" fill="#fff" />
                          </svg>
                          <svg width="21" height="23" viewBox="0 0 21 23" fill="none" aria-hidden="true">
                            <path d="M14 11V4c0-2-2-3-6-2" stroke="#5c5c5c" strokeWidth="3.500" />
                            <path d="M14 11V4c0-2-2-3-6-2" stroke="#c4bcbc" strokeWidth="2" />
                            <path d="M1 12l3-2h14l2 2v10H1z" fill="url(#steel)" stroke="#6c6464" />
                            <path d="M2 12.500h17" stroke="#ddd" />
                          </svg>
                        </LayerIcons>
                      </LayerItem>
                    </LayerRow>
                  </LayerList>
                  <LayerActions>
                    <ActionButton aria-label="New layer"><Art s={18}><path d="M4 1h9l5 5v14H4z" fill="url(#pale)" stroke="#555" /><path d="M13 1v5h5" fill="#fff" stroke="#555" /></Art></ActionButton>
                    <ActionButton disabled aria-label="Lower layer"><Triangle w={13} color="#808080" /></ActionButton>
                    <ActionButton disabled aria-label="Raise layer"><Triangle up w={13} color="#808080" /></ActionButton>
                    <ActionButton aria-label="Layer properties">...</ActionButton>
                    <ActionButton aria-label="Delete layer">
                      <svg width="14" height="16" viewBox="0 0 14 16" fill="none" aria-hidden="true">
                        <path d="M2 4h10v10.500l-1 1H3l-1-1z" fill="url(#fade)" stroke="#333" />
                        <path d="M.5 3h13M5 1h4" stroke="#333" strokeWidth="1.500" />
                        <path d="M4.500 5v9M9.500 5v9" stroke="#555" />
                      </svg>
                    </ActionButton>
                  </LayerActions>
                </LayerForm>
              </Panel>
            </Dock>
          </Docks>
        </Main>
        <StatusBar>
          <StatusCell>Zoom 100%</StatusCell>
          <StatusCell>No Selection</StatusCell>
          <StatusCell>sRGB built-in - (lcms internal)</StatusCell>
        </StatusBar>
      </Window>
      <Defs />
    </>
  );
}
